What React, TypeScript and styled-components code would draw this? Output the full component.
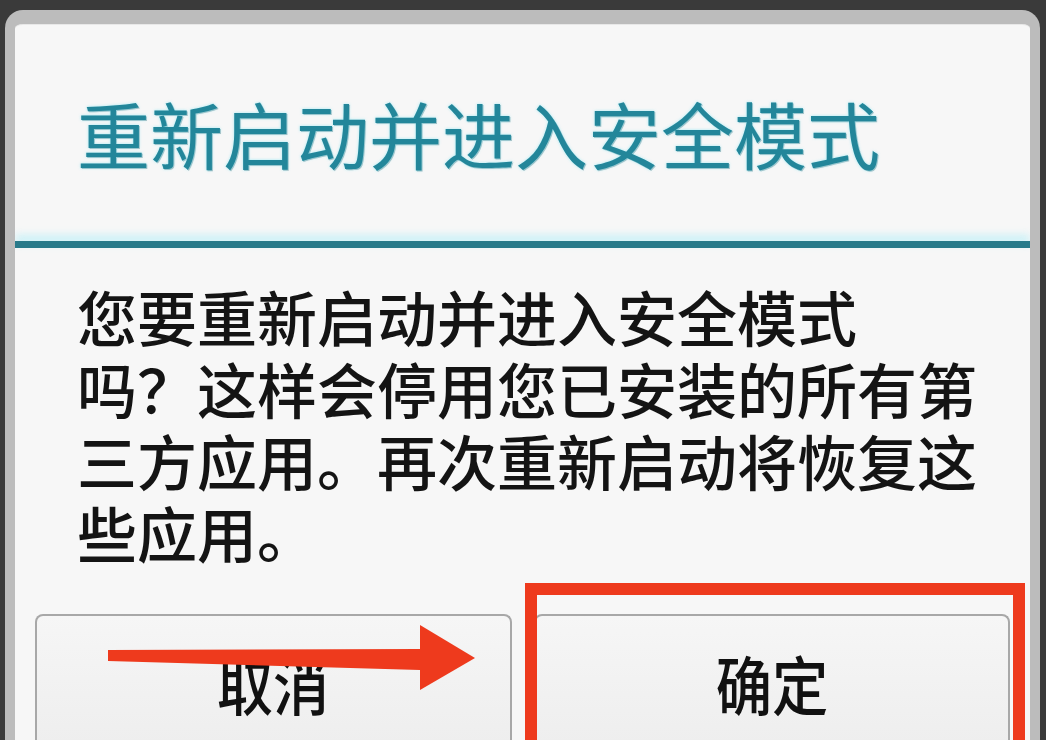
import React from 'react';
import styled, { createGlobalStyle } from 'styled-components';

const GlobalStyle = createGlobalStyle`
  html, body {
    margin: 0;
    padding: 0;
    width: 1046px;
    height: 740px;
    overflow: hidden;
    background: #3a3a3a;
    font-family: "Noto Sans CJK SC", "Noto Sans", sans-serif;
  }
`;

const Screen = styled.div`
  position: relative;
  width: 1046px;
  height: 740px;
  padding: 10px 6px 0 5px;
  box-sizing: border-box;
  display: flex;
  flex-direction: column;
  overflow: hidden;
`;

const Dialog = styled.div`
  flex: 1;
  display: flex;
  flex-direction: column;
  border: 10px solid #bcbcbc;
  border-top-width: 14px;
  border-bottom: none;
  border-radius: 18px 18px 0 0;
  background: #f7f7f7;
  overflow: hidden;
  box-shadow: inset 0 1px 0 #e8e8e8;
`;

const TitleBar = styled.div`
  flex-shrink: 0;
  height: 217px;
  display: flex;
  align-items: center;
  padding: 0 0 0 62px;
  box-sizing: border-box;
`;

const Title = styled.h1`
  margin: 0;
  font-size: 73px;
  line-height: 1;
  font-weight: 400;
  color: #23869a;
  text-shadow: 0 0 3px rgba(120, 230, 245, 0.7), 1px 1px 0 rgba(20, 80, 95, 0.35);
  letter-spacing: 0;
`;

const Divider = styled.div`
  flex-shrink: 0;
  height: 7px;
  background: #287a8a;
  box-shadow: 0 -5px 8px rgba(175, 238, 248, 0.8);
`;

const Message = styled.p`
  flex-shrink: 0;
  margin: 32px 0 0;
  padding: 0 20px 0 62px;
  font-size: 60px;
  line-height: 72px;
  font-weight: 500;
  color: #141414;
`;

const Buttons = styled.div`
  flex-shrink: 0;
  margin-top: 46px;
  padding: 0 20px;
  display: flex;
  gap: 22px;
`;

const Button = styled.button`
  flex: 1;
  height: 160px;
  border: 2px solid #a8a8a8;
  border-bottom: none;
  border-radius: 8px 8px 0 0;
  background: linear-gradient(#f6f6f6, #ececec);
  display: flex;
  justify-content: center;
  align-items: flex-start;
  padding-top: 26px;
  font-family: "Noto Sans CJK SC", "Noto Sans", sans-serif;
  font-size: 64px;
  line-height: 80px;
  font-weight: 500;
  color: #111;
`;

const Label = styled.span`
  display: inline-block;
  transform: scaleX(0.88);
`;

const Highlight = styled.div`
  position: absolute;
  left: 525px;
  top: 583px;
  width: 500px;
  height: 220px;
  box-sizing: border-box;
  border: 12px solid #ee3a1d;
  pointer-events: none;
`;

const Arrow = styled.svg`
  position: absolute;
  left: 100px;
  top: 620px;
  pointer-events: none;
`;

const App: React.FC = () => {
  return (
    <>
      <GlobalStyle />
      <Screen>
        <Dialog>
          <TitleBar>
            <Title>重新启动并进入安全模式</Title>
          </TitleBar>
          <Divider />
          <Message>
            您要重新启动并进入安全模式
            <br />
            吗？这样会停用您已安装的所有第
            <br />
            三方应用。再次重新启动将恢复这
            <br />
            些应用。
          </Message>
          <Buttons>
            <Button>
              <Label>取消</Label>
            </Button>
            <Button>
              <Label>确定</Label>
            </Button>
          </Buttons>
        </Dialog>
        <Highlight />
        <Arrow width="380" height="75" viewBox="0 0 380 75">
          <polygon points="8,30 320,29 320,50 8,41" fill="#ee3a1d" />
          <polygon points="320,5 375,38 320,70" fill="#ee3a1d" />
        </Arrow>
      </Screen>
    </>
  );
};

export default App;
